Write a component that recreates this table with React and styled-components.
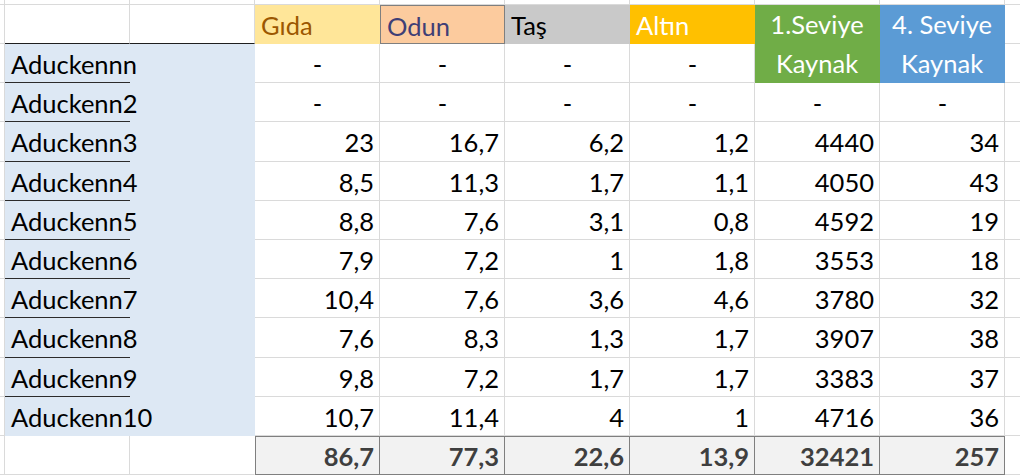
import React from 'react'
import styled, { createGlobalStyle } from 'styled-components'

const GRID = '#dadada'
const BOX = '#7f7f7f'

const GlobalStyle = createGlobalStyle`
  html, body {
    margin: 0;
    padding: 0;
    background: #fff;
  }
  body {
    font-family: Lato, "Open Sans", sans-serif;
  }
`

const Sheet = styled.div`
  display: grid;
  grid-template-columns: 5px repeat(8, 125px) 1fr;
  grid-template-rows: 5px 39px repeat(10, 39.2px) 39px;
  width: 1020px;
  height: 476px;
  overflow: hidden;
  font-size: 25.5px;
  color: #000;
`

const Cell = styled.div`
  box-sizing: border-box;
  min-width: 0;
  display: flex;
  align-items: center;
  padding: 2px 5px 0 6px;
  white-space: nowrap;
  background: ${p => p.$bg || '#fff'};
  color: ${p => p.$fg || '#000'};
  border-right: 1px solid ${p => p.$right || GRID};
  border-bottom: 1px solid ${p => p.$bottom || GRID};
  justify-content: ${p => p.$align === 'right' ? 'flex-end' : p.$align === 'center' ? 'center' : 'flex-start'};
`

const Edge = styled(Cell)`
  padding: 0;
  border-right: ${p => p.$open ? 'none' : `1px solid ${GRID}`};
`

const HeadCell = styled(Cell)`
  border-color: ${p => p.$boxed ? BOX : 'transparent'};
  border-style: solid;
  border-width: ${p => p.$boxed ? '1px' : '0 1px 1px 0'};
`

const TallHead = styled(Cell)`
  grid-row: span 2;
  flex-direction: column;
  justify-content: center;
  align-items: center;
  padding: 0;
  line-height: 39px;
  border-color: transparent;
`

const NameCell = styled.div`
  grid-column: span 2;
  background: #dde8f4;
  display: flex;
`

const NameLabel = styled.div`
  box-sizing: border-box;
  width: 125px;
  display: flex;
  align-items: center;
  padding: 2px 0 0 6px;
  white-space: nowrap;
  border-bottom: 1px solid ${p => p.$underline ? '#2b2b2b' : 'transparent'};
`

const TotalCell = styled(Cell)`
  background: #f2f2f2;
  color: #3f3f3f;
  font-weight: 700;
  justify-content: flex-end;
  border-top: 1px solid ${BOX};
  border-right: 1px solid ${BOX};
  border-bottom: 1px solid ${BOX};
  border-left: ${p => p.$first ? `1px solid ${BOX}` : 'none'};
`

const headers = [
  { label: 'Gıda', bg: '#ffe699', fg: '#9c5700' },
  { label: 'Odun', bg: '#fccb9e', fg: '#3f3f76', boxed: true },
  { label: 'Taş', bg: '#c9c9c9', fg: '#000' },
  { label: 'Altın', bg: '#ffc000', fg: '#fff' },
]

const tallHeaders = [
  { lines: ['1.Seviye', 'Kaynak'], bg: '#70ad47' },
  { lines: ['4. Seviye', 'Kaynak'], bg: '#5b9bd5' },
]

const rows = [
  ['Aduckennn', ['-', '-', '-', '-']],
  ['Aduckenn2', ['-', '-', '-', '-', '-', '-']],
  ['Aduckenn3', ['23', '16,7', '6,2', '1,2', '4440', '34']],
  ['Aduckenn4', ['8,5', '11,3', '1,7', '1,1', '4050', '43']],
  ['Aduckenn5', ['8,8', '7,6', '3,1', '0,8', '4592', '19']],
  ['Aduckenn6', ['7,9', '7,2', '1', '1,8', '3553', '18']],
  ['Aduckenn7', ['10,4', '7,6', '3,6', '4,6', '3780', '32']],
  ['Aduckenn8', ['7,6', '8,3', '1,3', '1,7', '3907', '38']],
  ['Aduckenn9', ['9,8', '7,2', '1,7', '1,7', '3383', '37']],
  ['Aduckenn10', ['10,7', '11,4', '4', '1', '4716', '36']],
]

const totals = ['86,7', '77,3', '22,6', '13,9', '32421', '257']

function App() {
  return (
    <Sheet>
      <GlobalStyle />

      {/* partial row above the header */}
      <Edge />
      {Array.from({ length: 8 }).map((_, i) => <Cell key={`top-${i}`} />)}
      <Edge $open />

      {/* header row */}
      <Edge />
      <Cell $bottom="#1f1f1f" />
      <Cell $bottom="#1f1f1f" />
      {headers.map(h => (
        <HeadCell key={h.label} $bg={h.bg} $fg={h.fg} $boxed={h.boxed}>{h.label}</HeadCell>
      ))}
      {tallHeaders.map((h, i) => (
        <TallHead key={i} $bg={h.bg} $fg="#fff">
          {h.lines.map(line => <span key={line}>{line}</span>)}
        </TallHead>
      ))}
      <Edge $open />

      {/* data rows */}
      {rows.map(([name, vals], r) => (
        <React.Fragment key={name}>
          <Edge />
          <NameCell>
            <NameLabel $underline={r < rows.length - 1}>{name}</NameLabel>
          </NameCell>
          {vals.map((v, i) => (
            <Cell key={i} $align={v === '-' ? 'center' : 'right'}>{v}</Cell>
          ))}
          <Edge $open />
        </React.Fragment>
      ))}

      {/* totals */}
      <Edge />
      <Cell />
      <Cell $right="transparent" />
      {totals.map((t, i) => (
        <TotalCell key={i} $first={i === 0}>{t}</TotalCell>
      ))}
      <Edge $open />
    </Sheet>
  )
}

export default App
